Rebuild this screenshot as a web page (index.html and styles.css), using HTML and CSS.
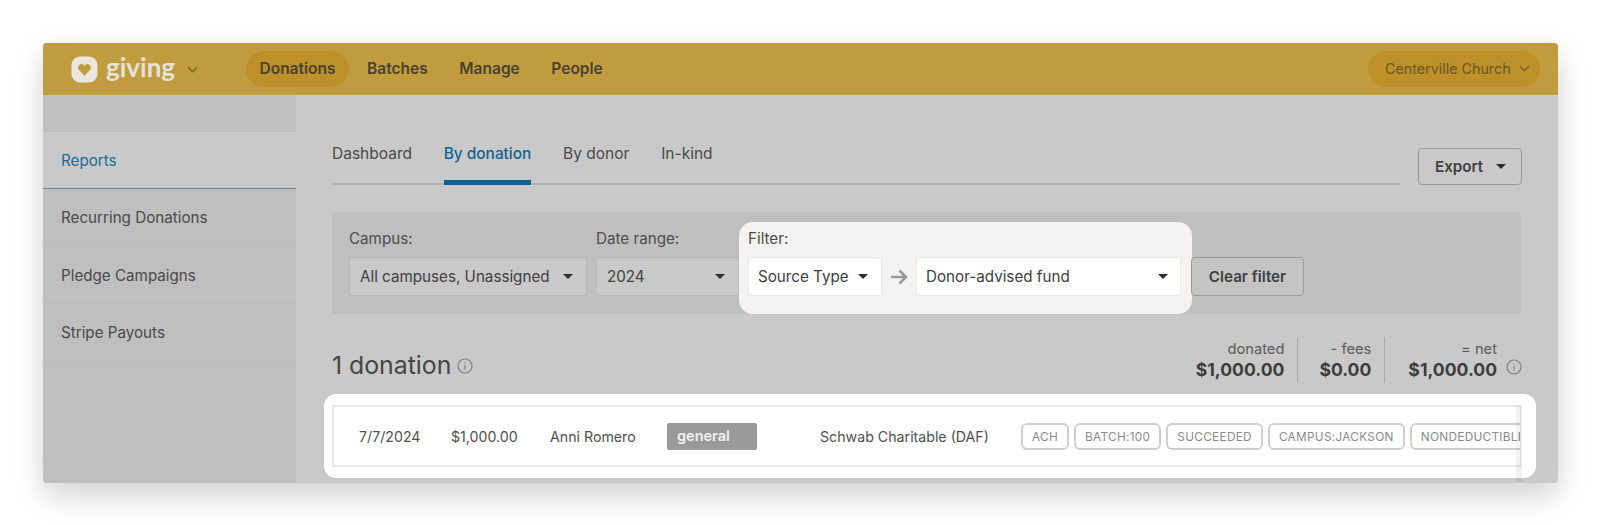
FILE: index.html
```html
<!DOCTYPE html>
<html lang="en">
<head>
<meta charset="utf-8">
<title>Giving</title>
<link rel="stylesheet" href="styles.css">
</head>
<body>
<div class="window">
  <header class="topbar">
    <div class="brand">
      <svg class="brand-icon" viewBox="0 0 28 28"><rect width="27" height="27" x="0.5" y="0.5" rx="9" fill="#ebe7df"/><path d="M14 20.5 8.400 14.600a3.600 3.600 0 0 1 0-5 3.500 3.500 0 0 1 5 0l.6.6.6-.6a3.500 3.500 0 0 1 5 0 3.600 3.600 0 0 1 0 5z" fill="#c19c3f"/></svg>
      <span class="brand-name">giving</span>
      <svg class="chev brand-chev" viewBox="0 0 10 6"><path d="M1 1l4 4 4-4"/></svg>
    </div>
    <nav class="mainnav">
      <a class="mainnav-item is-active">Donations</a>
      <a class="mainnav-item">Batches</a>
      <a class="mainnav-item">Manage</a>
      <a class="mainnav-item">People</a>
    </nav>
    <div class="org">Centerville Church<svg class="chev" viewBox="0 0 10 6"><path d="M1 1l4 4 4-4"/></svg></div>
  </header>
  <div class="body">
    <aside class="sidebar">
      <a class="side-item is-active">Reports</a>
      <a class="side-item">Recurring Donations</a>
      <a class="side-item">Pledge Campaigns</a>
      <a class="side-item">Stripe Payouts</a>
    </aside>
    <main class="main">
      <div class="tabrow">
        <div class="tabs">
          <a class="tab">Dashboard</a>
          <a class="tab is-active">By donation</a>
          <a class="tab">By donor</a>
          <a class="tab">In-kind</a>
        </div>
        <button class="btn export">Export<i class="caret"></i></button>
      </div>
      <section class="filters">
        <div class="field campus">
          <label class="field-label">Campus:</label>
          <div class="select">All campuses, Unassigned<i class="caret"></i></div>
        </div>
        <div class="field daterange">
          <label class="field-label">Date range:</label>
          <div class="select">2024<i class="caret"></i></div>
        </div>
        <div class="filter-panel">
          <label class="field-label">Filter:</label>
          <div class="filter-controls">
            <div class="select select-light source">Source Type<i class="caret"></i></div>
            <svg class="arrow" viewBox="0 0 18 16"><path d="M1 8h15M9.500 1.500 16 8l-6.500 6.500"/></svg>
            <div class="select select-light donor">Donor-advised fund<i class="caret"></i></div>
          </div>
        </div>
        <button class="btn clear">Clear filter</button>
      </section>
      <div class="summary">
        <h1 class="count">1 donation<svg class="info info-lg" viewBox="0 0 16 16"><circle cx="8" cy="8" r="7"/><path d="M8 7v4.500M8 4.400v1.200"/></svg></h1>
        <div class="totals">
          <div class="total"><span class="total-label">donated</span><strong class="total-value">$1,000.00</strong></div>
          <div class="total"><span class="total-label">- fees</span><strong class="total-value">$0.00</strong></div>
          <div class="total total-net"><span class="total-label">= net</span><strong class="total-value">$1,000.00</strong></div>
          <svg class="info" viewBox="0 0 16 16"><circle cx="8" cy="8" r="7"/><path d="M8 7v4.500M8 4.400v1.200"/></svg>
        </div>
      </div>
      <section class="row-card">
        <div class="row">
          <span class="cell c-date">7/7/2024</span>
          <span class="cell c-amount">$1,000.00</span>
          <span class="cell c-name">Anni Romero</span>
          <span class="badge">general</span>
          <span class="cell c-source">Schwab Charitable (DAF)</span>
          <div class="tags">
            <span class="tag">ACH</span>
            <span class="tag">BATCH:100</span>
            <span class="tag">SUCCEEDED</span>
            <span class="tag">CAMPUS:JACKSON</span>
            <span class="tag">NONDEDUCTIBLE</span>
          </div>
        </div>
      </section>
    </main>
  </div>
</div>
</body>
</html>
```
FILE: styles.css
```css
* { box-sizing: border-box; }
html, body { margin: 0; height: 525px; overflow: hidden; background: #fff; }
body { padding: 43px 42px 0 43px; font-family: Inter, "Liberation Sans", sans-serif; font-size: 15.2px; color: #434343; }
a { display: block; }
.window { height: 440px; display: flex; flex-direction: column; border-radius: 4px; background: #c9c9c9; box-shadow: 0 12px 30px rgba(0,0,0,.18); }
.topbar { height: 52px; flex: none; display: flex; align-items: center; padding: 0 18px 0 28px; background: #c19c3f; border-radius: 4px 4px 0 0; }
.brand { display: flex; align-items: center; width: 175px; flex: none; }
.brand-icon { width: 27px; height: 27px; margin-right: 8px; }
.brand-name { font-family: Lato, sans-serif; font-weight: 700; font-size: 26px; line-height: 1; color: #e6e2d8; margin-top: -4px; }
.chev { width: 11px; height: 7px; fill: none; stroke: #75622e; stroke-width: 1.400; }
.brand-chev { margin-left: 12px; }
.mainnav { display: flex; align-items: center; gap: 4.6px; }
.mainnav-item { height: 36px; line-height: 36px; padding: 0 13.5px; border-radius: 18px; font-weight: 600; font-size: 15.5px; color: #4a4230; }
.mainnav-item.is-active { background: #bd9029; }
.org { margin-left: auto; height: 36px; width: 172px; margin-top: -1px; display: flex; align-items: center; justify-content: space-between; padding: 0 10px 0 17px; border-radius: 18px; background: #bd9029; color: #6a5725; font-size: 14.300px; }
.body { flex: 1; display: flex; min-height: 0; }
.sidebar { width: 253px; flex: none; padding-top: 36px; background: #bfbfbf; border-radius: 0 0 0 4px; }
.side-item { height: 57.5px; line-height: 57.5px; padding-left: 18px; border-bottom: 1px solid #bababa; color: #4a4a4a; }
.side-item.is-active { height: 58px; line-height: 58px; background: #c9c9c9; color: #1a6a9c; border-bottom: 1px solid #5d8aa8; border-top: 1px solid #bbb; }
.main { flex: 1; min-width: 0; padding: 0 36px 0 36px; }
.tabrow { display: flex; align-items: flex-end; justify-content: space-between; height: 90px; }
.tabs { width: 1068px; display: flex; gap: 31.8px; border-bottom: 2px solid #b3b3b3; height: 43px; font-size: 15.5px; }
.tab { height: 43px; color: #4a4a4a; padding-top: 2px; }
.tab.is-active { color: #0f6494; font-weight: 500; border-bottom: 5px solid #0b6494; font-size: 15.4px; }
.btn { font: 600 15.2px Inter, sans-serif; color: #404040; border: 1px solid #9b9b9b; border-radius: 4px; background: #c9c9c9; height: 37px; }
.export { width: 104px; padding: 0 0 0 16px; display: flex; align-items: center; }
.caret { display: inline-block; width: 0; height: 0; border: 5px solid transparent; border-top-color: #2c2c2c; border-bottom-width: 0; margin-left: auto; }
.export .caret { margin: 0 15px 0 auto; }
.filters { margin-top: 27px; height: 102px; width: 1189px; background: #bfbfbf; border-radius: 2px; display: flex; align-items: flex-start; padding: 0 0 0 17px; }
.field { padding-top: 18px; margin-right: 9px; }
.field-label { display: block; height: 27px; line-height: 18px; color: #4d4d4d; }
.select { height: 39px; display: flex; align-items: center; padding: 0 10px; background: #c9c9c9; border: 1px solid #b8b8b8; border-radius: 3px; color: #404040; }
.campus .select { width: 238px; }
.campus .caret { margin-right: 3px; }
.daterange { margin-right: 0; }
.daterange .select { width: 143px; }
.daterange .caret { margin-right: 3px; }
.filter-panel { width: 453px; height: 92px; margin-top: 10px; padding: 8px 11px 0 9px; background: #f4f3f1; border-radius: 14px; }
.filter-controls { display: flex; align-items: center; justify-content: space-between; }
.select-light { background: #fff; border-color: #e9e9e9; padding: 0 9px; }
.source { width: 134px; }
.source .caret { margin-right: 4px; }
.donor { width: 265px; }
.donor .caret { margin-right: 3px; }
.arrow { width: 18px; height: 16px; fill: none; stroke: #999; stroke-width: 2.500; }
.clear { width: 113px; height: 39px; margin: 45px 0 0 -1px; background: #c4c4c4; }
.summary { display: flex; align-items: flex-start; justify-content: space-between; height: 69px; width: 1190px; padding-top: 22px; }
.count { margin: 12px 0 0; font-size: 24.800px; font-weight: 400; line-height: 34px; color: #454545; display: flex; align-items: center; }
.info { width: 16px; height: 16px; fill: none; stroke: #7e7e7e; stroke-width: 1.200; flex: none; }
.info-lg { margin-left: 6px; margin-top: 2px; }
.totals { display: flex; align-items: flex-end; height: 46px; margin-top: 1px; }
.total { display: flex; flex-direction: column; align-items: flex-end; height: 46px; padding: 2px 13px 0 23px; border-right: 1px solid #aaa; }
.total:nth-child(2) { padding-left: 21px; }
.total-net { border: 0; padding-right: 0; }
.total-label { font-size: 14.700px; color: #5c5c5c; line-height: 20px; }
.total-value { font-size: 17.600px; font-weight: 700; line-height: 22px; color: #3d3d3d; }
.totals .info { margin: 0 0 8px 9px; }
.row-card { margin: 11px -15px 0 -8px; width: 1212px; height: 84px; background: #fff; border-radius: 12px; padding: 11px 15px 0 8px; position: relative; }
.row-card::after { content: ""; position: absolute; right: 14px; top: 11px; width: 6px; height: 77px; background: rgba(0,0,0,.05); }
.row { height: 62px; border: 2px solid #e8e8e8; border-right-width: 1px; display: flex; align-items: center; overflow: hidden; padding-left: 25px; color: #505050; font-size: 14.200px; }
.cell { flex: none; white-space: nowrap; }
.c-date { width: 92px; }
.c-amount { width: 99px; }
.c-name { width: 117px; }
.badge { flex: none; width: 90px; height: 27px; line-height: 26px; padding-left: 10px; background: #9a9a9a; border-radius: 2px; color: #f2f2f2; font-weight: 600; font-size: 14.500px; }
.c-source { width: 201px; margin-left: 63px; }
.tags { display: flex; gap: 5px; flex: none; }
.tag { height: 27px; line-height: 24px; padding: 0 9px; border: 2px solid #cfcfcf; border-radius: 6px; font-size: 11.800px; color: #8a8a8a; letter-spacing: .3px; white-space: nowrap; }
```
